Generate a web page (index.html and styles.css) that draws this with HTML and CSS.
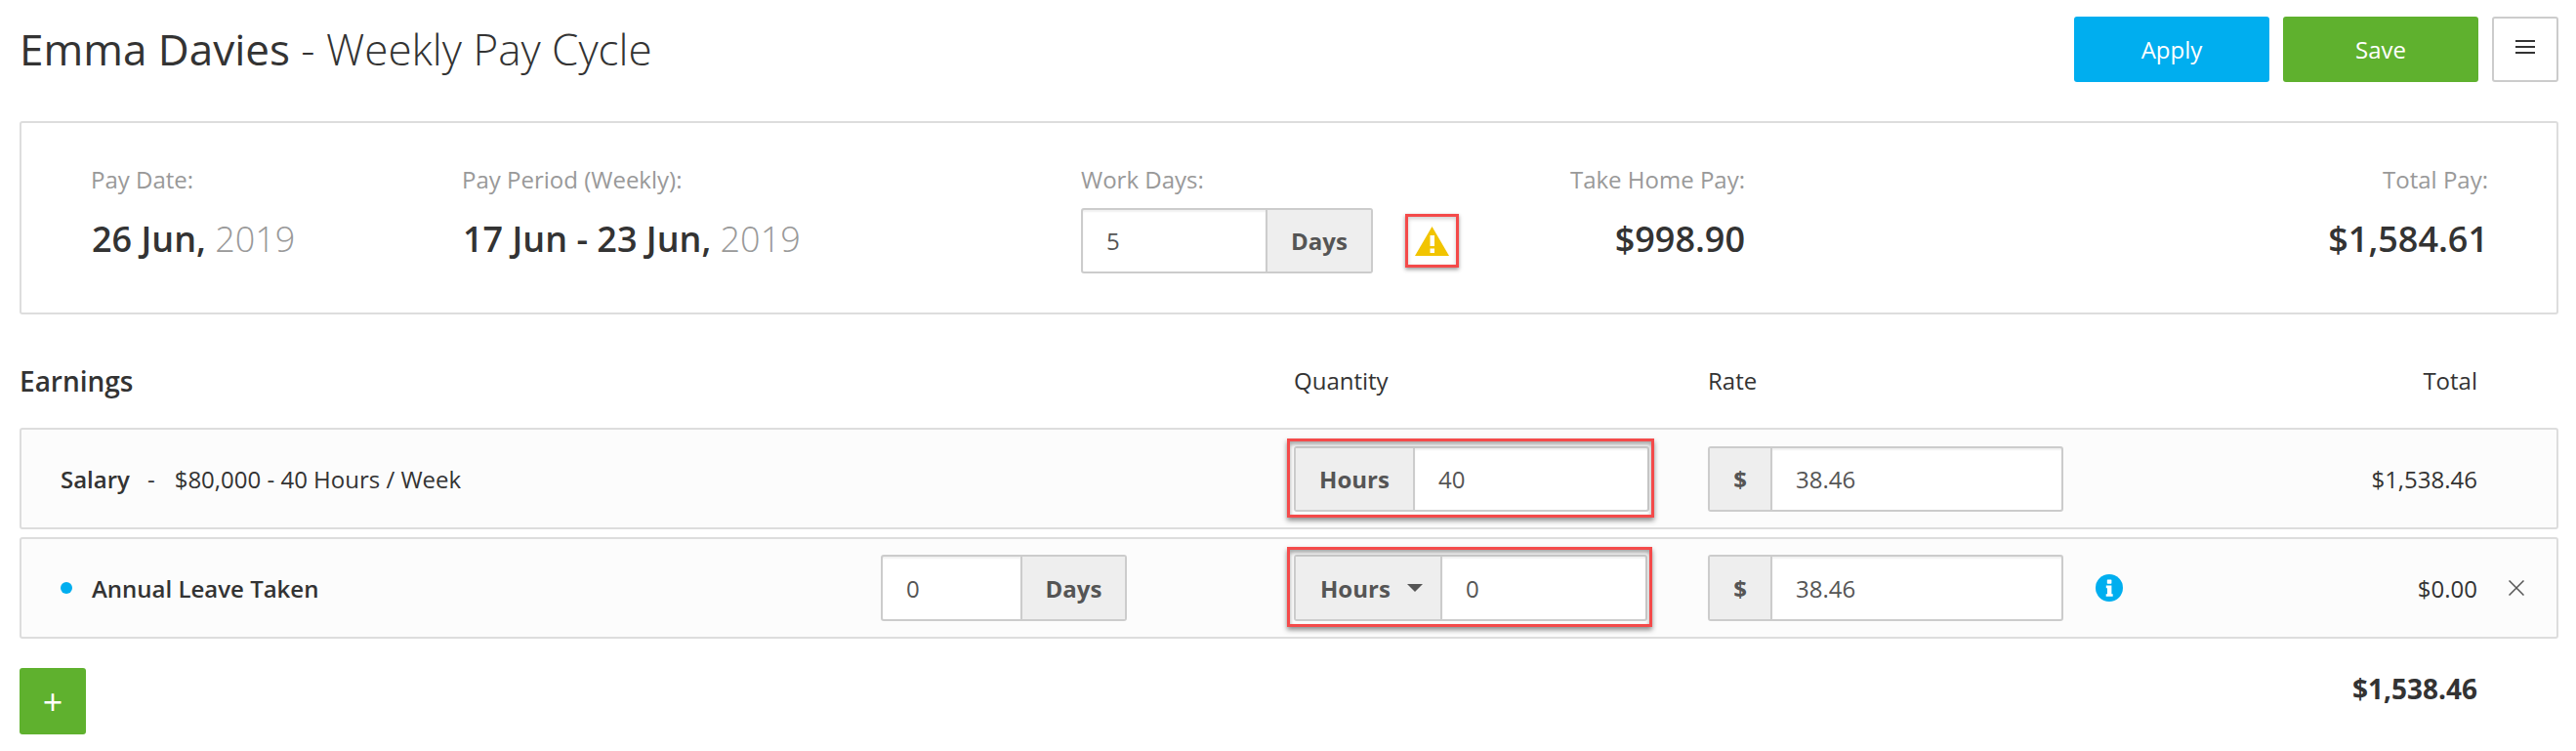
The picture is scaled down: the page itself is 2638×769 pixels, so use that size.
FILE: index.html
```html
<!DOCTYPE html>
<html lang="en">
<head>
<meta charset="utf-8">
<title>Emma Davies - Weekly Pay Cycle</title>
<link rel="stylesheet" href="styles.css">
</head>
<body>
<div class="page">
  <header class="topbar">
    <h1 class="title"><span class="title-name">Emma Davies</span> - Weekly Pay Cycle</h1>
    <div class="actions">
      <button class="btn btn-blue">Apply</button>
      <button class="btn btn-green">Save</button>
      <button class="btn-menu" aria-label="Menu"><span class="bar"></span><span class="bar"></span><span class="bar"></span></button>
    </div>
  </header>

  <section class="summary">
    <div class="stat stat-left">
      <div class="label">Pay Date:</div>
      <div class="value">26 Jun, <span class="year">2019</span></div>
    </div>
    <div class="stat stat-left">
      <div class="label">Pay Period (Weekly):</div>
      <div class="value">17 Jun - 23 Jun, <span class="year">2019</span></div>
    </div>
    <div class="stat">
      <div class="label">Work Days:</div>
      <div class="workdays">
        <div class="group group-work"><span class="field">5</span><span class="addon addon-work">Days</span></div>
        <div class="warn-box">
          <svg class="warn-icon" viewBox="0 0 35 30"><path class="warn-tri" d="M17.5 0 35 30H0z"/><rect class="warn-mark" x="15.5" y="9" width="4.5" height="11"/><rect class="warn-mark" x="15.5" y="22.5" width="4.5" height="4.5"/></svg>
        </div>
      </div>
    </div>
    <div class="stat stat-right">
      <div class="label">Take Home Pay:</div>
      <div class="value">$998.90</div>
    </div>
    <div class="stat stat-right">
      <div class="label">Total Pay:</div>
      <div class="value">$1,584.61</div>
    </div>
  </section>

  <div class="earn-head">
    <div class="earn-title">Earnings</div>
    <div class="earn-col">Quantity</div>
    <div class="earn-col">Rate</div>
    <div class="earn-col">Total</div>
  </div>

  <div class="row">
    <div class="row-name row-wide"><span class="strong">Salary</span><span class="sep">-</span>$80,000 - 40 Hours / Week</div>
    <div class="group group-qty marked"><span class="addon addon-hours">Hours</span><span class="field">40</span></div>
    <div class="col-spacer"></div>
    <div class="group group-rate"><span class="addon addon-dollar">$</span><span class="field">38.46</span></div>
    <div class="col-spacer"></div>
    <div class="col-spacer"></div>
    <div class="row-total">$1,538.46</div>
    <div class="col-spacer"></div>
  </div>

  <div class="row row-leave">
    <div class="row-name"><span class="dot"></span><span class="strong">Annual Leave Taken</span></div>
    <div class="group group-small"><span class="field">0</span><span class="addon addon-small">Days</span></div>
    <div class="col-spacer"></div>
    <div class="group group-qty-two marked"><span class="addon addon-select">Hours<span class="caret"></span></span><span class="field">0</span></div>
    <div class="col-spacer"></div>
    <div class="group group-rate"><span class="addon addon-dollar">$</span><span class="field">38.46</span></div>
    <div class="col-spacer"></div>
    <svg class="info" viewBox="0 0 28 28"><circle class="info-bg" cx="14" cy="14" r="14"/><rect class="info-mark" x="11.8" y="5.5" width="4.6" height="4.2" rx=".6"/><path class="info-mark" d="M10.8 11.6h5.6v8.6h1.3v2.6h-7v-2.6h1.3v-6h-1.2z"/></svg>
    <div class="row-total">$0.00</div>
    <svg class="remove" viewBox="0 0 16 16"><path class="remove-line" d="M.5.5l15 15M15.5.5l-15 15"/></svg>
  </div>

  <div class="foot">
    <button class="btn-add">+</button>
    <div class="grand">$1,538.46</div>
  </div>
</div>
</body>
</html>
```
FILE: styles.css
```css
* { box-sizing: border-box; }
html, body { margin: 0; padding: 0; background: #fff; }
body { font-family: "Open Sans", "Liberation Sans", sans-serif; font-size: 24px; color: #333; }
.page { padding: 17px 18px 0 20px; }

.topbar { display: flex; justify-content: space-between; align-items: center; height: 67px; margin-bottom: 40px; }
.title { margin: -2px 0 0; font-size: 44px; font-weight: 300; color: #333; line-height: 54px; }
.title-name { font-weight: 400; }
.actions { display: flex; gap: 14px; }
.btn { width: 200px; height: 67px; border: 0; border-radius: 3px; color: #fff; font: 400 24px "Open Sans", sans-serif; }
.btn-blue { background: #00aeef; }
.btn-green { background: #5fb12e; }
.btn-menu { width: 68px; height: 67px; background: #fff; border: 2px solid #ccc; border-radius: 3px; display: flex; flex-direction: column; align-items: center; justify-content: center; gap: 4px; padding: 0 0 6px; }
.bar { display: block; width: 20px; height: 2px; background: #333; }

.summary { display: grid; grid-template-columns: 380px 634px 443px 237px 1fr; height: 198px; border: 2px solid #ddd; border-radius: 3px; padding: 42px 70px 0 71px; margin-bottom: 49px; }
.label { color: #999; line-height: 32px; }
.value { font-size: 36px; font-weight: 600; line-height: 48px; margin-top: 21px; color: #333; }
.stat-left .value { padding-left: 1px; }
.year { font-weight: 300; color: #999; }
.stat-right { text-align: right; }
.workdays { display: flex; align-items: center; gap: 33px; margin-top: 13px; }
.warn-box { width: 55px; height: 55px; border: 3px solid #f44a4a; box-shadow: 0 2px 4px rgba(0,0,0,.4), inset 0 2px 4px rgba(0,0,0,.2); display: flex; align-items: center; justify-content: center; }
.warn-icon { width: 35px; height: 30px; }
.warn-tri { fill: #f1c400; }
.warn-mark { fill: #fff; }

.group { display: flex; height: 67px; border: 2px solid #ccc; border-radius: 3px; background: #fff; color: #555; position: relative; }
.field { flex: 1; display: flex; align-items: center; padding-left: 24px; box-shadow: inset 0 2px 2px rgba(0,0,0,.06); }
.addon { display: flex; align-items: center; justify-content: center; background: #eee; font-weight: 700; color: #555; }
.group-work { width: 299px; }
.addon-work { width: 108px; border-left: 2px solid #ccc; }
.group-small { width: 252px; height: 68px; }
.addon-small { width: 107px; border-left: 2px solid #ccc; }
.group-qty { width: 364px; }
.group-qty-two { width: 362px; height: 68px; }
.addon-hours { width: 122px; border-right: 2px solid #ccc; }
.addon-select { width: 150px; border-right: 2px solid #ccc; justify-content: flex-start; padding-left: 25px; }
.caret { width: 0; height: 0; border: 8px solid transparent; border-top-color: #555; border-bottom-width: 0; margin-left: 17px; }
.group-rate { width: 364px; }
.addon-dollar { width: 64px; border-right: 2px solid #ccc; }
.marked::after { content: ""; position: absolute; left: -9px; right: -7px; top: -10px; bottom: -8px; border: 3px solid #f44a4a; box-shadow: 0 3px 5px rgba(0,0,0,.45), inset 0 3px 4px rgba(0,0,0,.35); pointer-events: none; }

.earn-head { display: grid; grid-template-columns: 1305px 424px 1fr auto; align-items: center; height: 32px; padding-right: 83px; margin-bottom: 35px; }
.earn-title { font-weight: 600; font-size: 28px; }
.earn-col { margin-top: -2px; }

.row { display: grid; grid-template-columns: 840px 252px 171px 364px 60px 364px 33px 28px 1fr 81px; align-items: center; height: 104px; margin-bottom: 8px; padding-left: 40px; background: #fcfcfc; border: 2px solid #ddd; border-radius: 3px; }
.row-wide { grid-column: span 3; }
.row-leave .group-rate { height: 68px; }
.row-name { display: flex; align-items: center; }
.strong { font-weight: 600; }
.sep { margin: 0 20px 0 18px; }
.dot { width: 12px; height: 12px; border-radius: 50%; background: #00aeef; margin-right: 20px; }
.row-total { text-align: right; }
.info { width: 28px; height: 28px; }
.info-bg { fill: #00aeef; }
.info-mark { fill: #fff; }
.remove { width: 16px; height: 16px; margin-left: 32px; }
.remove-line { stroke: #555; stroke-width: 1.5; fill: none; }

.foot { display: flex; justify-content: space-between; align-items: center; padding-right: 83px; margin-top: 30px; }
.btn-add { width: 68px; height: 68px; border: 0; border-radius: 3px; background: #5fb12e; color: #fff; font: 400 36px "Open Sans", sans-serif; padding: 0; }
.grand { font-size: 28px; font-weight: 700; margin-top: -26px; }
```
